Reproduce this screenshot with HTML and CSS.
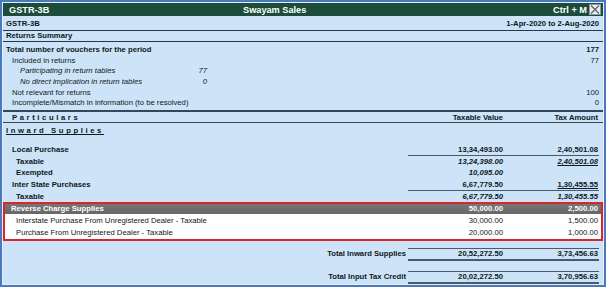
FILE: index.html
```html
<!DOCTYPE html>
<html lang="en">
<head>
    <meta charset="UTF-8">
    <title>GSTR-3B</title>
    <link rel="stylesheet" href="styles.css">
</head>
<body>
<div class="window">
    <div class="titlebar">
        <span class="tb-left">GSTR-3B</span>
        <span class="tb-title">Swayam Sales</span>
        <span class="tb-keys">Ctrl + M</span>
        <span class="tb-close">
            <svg width="10" height="9" viewBox="0 0 10 9"><path d="M1 0.5L9 8.5M9 0.5L1 8.5" stroke="#5a6470" stroke-width="1.2" fill="none"/></svg>
        </span>
    </div>
    <div class="content">
        <div class="report-head">
            <span>GSTR-3B</span>
            <span>1-Apr-2020 to 2-Aug-2020</span>
        </div>
        <div class="section-title">Returns Summary</div>
        <div class="summary">
            <div class="sum-row bold"><span class="lbl">Total number of vouchers for the period</span><span class="val">177</span></div>
            <div class="sum-row in1"><span class="lbl">Included in returns</span><span class="val">77</span></div>
            <div class="sum-row in2 ital"><span class="lbl short">Participating in return tables</span><span class="mid">77</span></div>
            <div class="sum-row in2 ital"><span class="lbl short">No direct implication in return tables</span><span class="mid">0</span></div>
            <div class="sum-row in1"><span class="lbl">Not relevant for returns</span><span class="val">100</span></div>
            <div class="sum-row in1"><span class="lbl">Incomplete/Mismatch in information (to be resolved)</span><span class="val">0</span></div>
        </div>
        <div class="col-head">
            <span class="spaced">Particulars</span>
            <span class="num">Taxable Value</span>
            <span class="num">Tax Amount</span>
        </div>
        <div class="group-title"><span class="spaced">Inward Supplies</span></div>
        <div class="inward">
            <div class="row bold in1 ruled"><span>Local Purchase</span><span class="num">13,34,493.00</span><span class="num">2,40,501.08</span></div>
            <div class="row bold in2"><span>Taxable</span><span class="num ital">13,24,398.00</span><span class="num ital"><u>2,40,501.08</u></span></div>
            <div class="row bold in2"><span>Exempted</span><span class="num ital">10,095.00</span><span class="num"></span></div>
            <div class="row bold in1 ruled"><span>Inter State Purchases</span><span class="num">6,67,779.50</span><span class="num"><u>1,30,455.55</u></span></div>
            <div class="row bold in2"><span>Taxable</span><span class="num ital">6,67,779.50</span><span class="num ital">1,30,455.55</span></div>
        </div>
        <div class="highlight">
            <div class="row bar"><span>Reverse Charge Supplies</span><span class="num">50,000.00</span><span class="num">2,500.00</span></div>
            <div class="white-rows">
                <div class="row in2"><span>Interstate Purchase From Unregistered Dealer - Taxable</span><span class="num">30,000.00</span><span class="num">1,500.00</span></div>
                <div class="row in2"><span>Purchase From Unregistered Dealer - Taxable</span><span class="num">20,000.00</span><span class="num">1,000.00</span></div>
            </div>
        </div>
        <div class="totals">
            <div class="total-row"><span class="t-lbl">Total Inward Supplies</span><span class="num">20,52,272.50</span><span class="num">3,73,456.63</span></div>
            <div class="total-row"><span class="t-lbl">Total Input Tax Credit</span><span class="num">20,02,272.50</span><span class="num">3,70,956.63</span></div>
        </div>
    </div>
</div>
</body>
</html>
```

FILE: styles.css
```css
*{
    margin: 0;
    padding: 0;
    box-sizing: border-box;
}
body{
    font-family: "Liberation Sans", Arial, sans-serif;
    font-size: 7.7px;
    color: #0e1822;
    background: #ffffff;
}
.window{
    width: 606px;
    height: 287px;
    border: 2px solid #4a79bd;
    padding: 1px;
    background: #e4effa;
    display: flex;
    flex-direction: column;
    overflow: hidden;
}
.titlebar{
    height: 13px;
    flex: none;
    background: #1b4c3c;
    color: #ffffff;
    font-weight: bold;
    font-size: 9.2px;
    display: grid;
    grid-template-columns: 234px auto 1fr auto auto;
    align-items: center;
    padding: 0 2px 0 6px;
}
.tb-keys{
    grid-column: 4;
    margin-right: 2px;
}
.tb-close{
    width: 12px;
    height: 11px;
    background: #e9edf1;
    border: 1px solid #8e9aa6;
    display: flex;
    align-items: center;
    justify-content: center;
}
.content{
    flex: 1;
    background: #cde4f8;
    display: flex;
    flex-direction: column;
}
.report-head{
    height: 15px;
    flex: none;
    border-bottom: 1px solid #2a3846;
    display: flex;
    justify-content: space-between;
    align-items: center;
    font-weight: bold;
    padding: 0 4px 0 3px;
}
.section-title{
    height: 11px;
    flex: none;
    line-height: 10px;
    border-bottom: 1px solid #2a3846;
    font-weight: bold;
    padding: 0 3px;
}
.summary{
    padding: 3px 4px 1px 3px;
}
.sum-row{
    display: grid;
    grid-template-columns: 170px 31px 1fr;
    line-height: 10.7px;
    height: 10.7px;
    white-space: nowrap;
}
.sum-row .lbl{
    grid-column: 1 / 3;
}
.sum-row .lbl.short{
    grid-column: 1;
}
.sum-row .mid{
    grid-column: 2;
    text-align: right;
}
.sum-row .val{
    grid-column: 3;
    text-align: right;
}
.bold{
    font-weight: bold;
}
.ital{
    font-style: italic;
}
.in1 > span:first-child{
    padding-left: 6px;
}
.in2 > span:first-child{
    padding-left: 10px;
}
.sum-row.in2 > span:first-child{
    padding-left: 14px;
}
.col-head{
    border-top: 2px solid #34475a;
    border-bottom: 1px solid #34475a;
    height: 13px;
    flex: none;
    display: grid;
    grid-template-columns: 1fr 96px 95px;
    align-items: center;
    font-weight: bold;
    padding: 0 4px 0 3px;
}
.col-head .spaced{
    padding-left: 6px;
}
.spaced{
    letter-spacing: 2.6px;
}
.num{
    text-align: right;
    padding-right: 1px;
    white-space: nowrap;
}
.group-title{
    height: 21px;
    flex: none;
    padding: 2px 3px 0;
    font-weight: bold;
    line-height: 11px;
}
.group-title .spaced{
    text-decoration: underline;
}
.inward{
    padding: 0 4px 0 3px;
}
.row{
    display: grid;
    grid-template-columns: 1fr 96px 95px;
    height: 11.6px;
    line-height: 11.6px;
    white-space: nowrap;
}
.row.ruled .num{
    box-shadow: inset 0 -1px #485b6d;
}
.highlight{
    border: 2px solid #d8262c;
    flex: none;
}
.row.bar{
    height: 10px;
    line-height: 10px;
    background: linear-gradient(#767676, #686868);
    color: #ffffff;
    font-weight: bold;
    padding: 0 2px 0 1px;
}
.row.bar > span:first-child{
    padding-left: 5px;
}
.white-rows{
    background: #ffffff;
    padding: 1px 2px 0 1px;
    height: 25px;
}
.totals{
    padding: 7px 4px 0 3px;
    display: flex;
    flex-direction: column;
    gap: 10px;
}
.total-row{
    display: grid;
    grid-template-columns: 1fr 96px 95px;
    font-weight: bold;
    line-height: 10px;
}
.total-row .num{
    border-top: 1px solid #485b6d;
    border-bottom: 2px solid #485b6d;
}
.total-row .t-lbl{
    text-align: right;
    padding-right: 2px;
    border-bottom: 2px solid transparent;
    border-top: 1px solid transparent;
}
```
